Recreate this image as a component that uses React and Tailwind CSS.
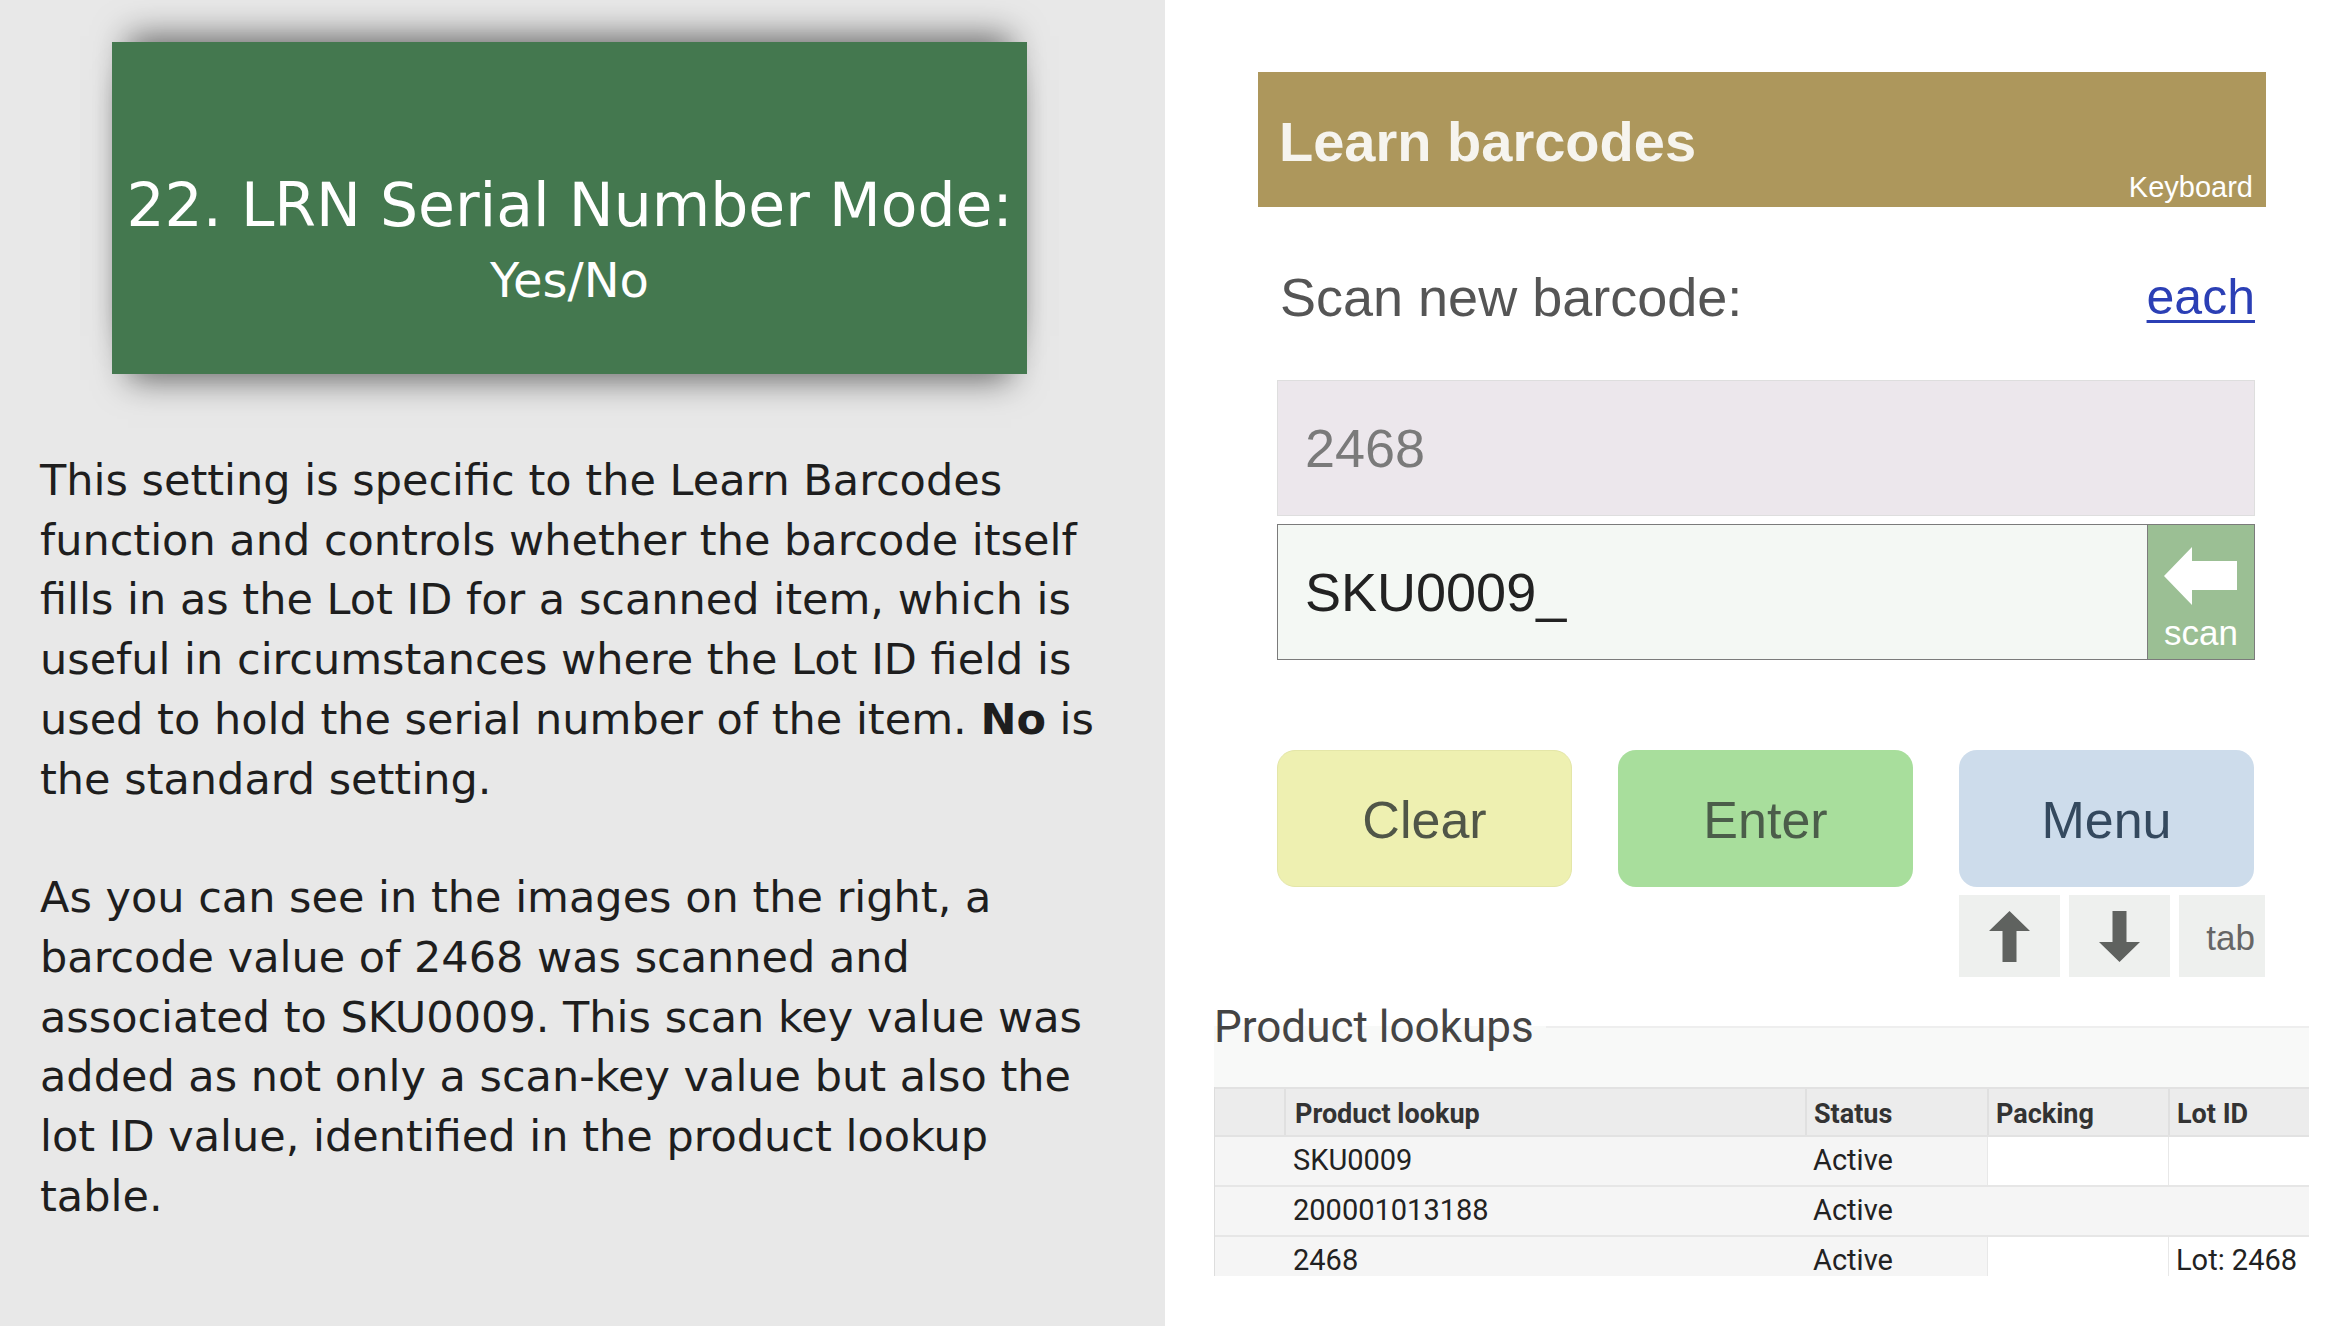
import React from "react";

const leftFont = { fontFamily: '"DejaVu Sans", "Open Sans", sans-serif' };

const ArrowUp = () => (
  <svg width="41" height="51" viewBox="0 0 41 51">
    <polygon points="20.5,0 41,20 27.5,20 27.5,51 13.5,51 13.5,20 0,20" fill="#5f625f" />
  </svg>
);

const ArrowDown = () => (
  <svg width="41" height="51" viewBox="0 0 41 51">
    <polygon points="13.5,0 27.5,0 27.5,31 41,31 20.5,51 0,31 13.5,31" fill="#5f625f" />
  </svg>
);

const rows = [
  { code: "SKU0009", status: "Active", lot: "", packWhite: true, lotWhite: true },
  { code: "200001013188", status: "Active", lot: "", packWhite: false, lotWhite: false },
  { code: "2468", status: "Active", lot: "Lot: 2468", packWhite: true, lotWhite: true },
];

export default function App() {
  return (
    <div className="flex h-[1326px] w-[2350px] overflow-hidden bg-white">
      {/* Left: explanation */}
      <div className="w-[1165px] shrink-0 bg-[#e8e8e8] pt-[42px] text-[#1e1e1e]" style={leftFont}>
        <div className="ml-[112px] h-[332px] w-[915px] bg-[#44784f] pt-[128px] text-center text-white shadow-[0_-22px_32px_-16px_rgba(0,0,0,0.55),0_22px_32px_-16px_rgba(0,0,0,0.55)]">
          <div className="whitespace-nowrap text-[60px] leading-[70px]">22. LRN Serial Number Mode:</div>
          <div className="mt-[10px] text-[48px] leading-[60px]">Yes/No</div>
        </div>

        <div className="mt-[77px] pl-[40px] text-[43px] leading-[59.7px] whitespace-nowrap">
          <p>
            This setting is specific to the Learn Barcodes
            <br />
            function and controls whether the barcode itself
            <br />
            fills in as the Lot ID for a scanned item, which is
            <br />
            useful in circumstances where the Lot ID field is
            <br />
            used to hold the serial number of the item. <span className="font-semibold">No</span> is
            <br />
            the standard setting.
          </p>
          <p className="mt-[59px]">
            As you can see in the images on the right, a
            <br />
            barcode value of 2468 was scanned and
            <br />
            associated to SKU0009. This scan key value was
            <br />
            added as not only a scan-key value but also the
            <br />
            lot ID value, identified in the product lookup
            <br />
            table.
          </p>
        </div>
      </div>

      {/* Right: device screenshot */}
      <div className="flex flex-1 flex-col bg-white" style={{ fontFamily: '"Liberation Sans", Arial, sans-serif' }}>
        <div className="ml-[93px] mr-[85px] mt-[72px] flex h-[135px] flex-col bg-[#ad975c] pl-[21px] pr-[13px] text-[#f6f4ee]">
          <div className="pt-[42px] text-[56px] font-bold leading-[56px]">Learn barcodes</div>
          <div className="mt-[3px] text-right text-[29px] leading-[29px] text-white">Keyboard</div>
        </div>

        <div className="ml-[115px] mr-[96px] mt-[63px] flex items-center justify-between text-[54px] leading-[54px]">
          <span className="text-[#555555]">Scan new barcode:</span>
          <a href="#" className="text-[50px] text-[#2b3fb5] underline decoration-[3px] underline-offset-[6px]">
            each
          </a>
        </div>

        <div className="ml-[112px] mr-[96px] mt-[56px] flex h-[136px] items-center border border-[#dedede] bg-[#ece7ec] pl-[27px] text-[54px] text-[#7a7a7a]">
          2468
        </div>

        <div className="ml-[112px] mr-[96px] mt-[8px] flex h-[136px] border border-[#7b7b7b] bg-[#f4f8f4]">
          <div className="flex flex-1 items-center pl-[27px] text-[54px] text-[#222222]">SKU0009_</div>
          <div className="flex w-[107px] flex-col items-center border-l border-[#7b7b7b] bg-[#9bbf94] pt-[22px]">
            <svg width="74" height="58" viewBox="0 0 74 58">
              <polygon points="0,29 28,0 28,14 73,14 73,43 28,43 28,58" fill="#ffffff" />
            </svg>
            <span className="mt-[10px] text-[35px] leading-[36px] text-white">scan</span>
          </div>
        </div>

        <div className="ml-[112px] mt-[90px] flex gap-[46px] text-[52px]">
          <button className="flex h-[137px] w-[295px] items-center justify-center rounded-[18px] border border-[#e4e6a8] bg-[#eef0b1] pt-[3px] text-[#505648]">
            Clear
          </button>
          <button className="flex h-[137px] w-[295px] items-center justify-center rounded-[18px] bg-[#a8de9c] pt-[3px] text-[#4b5d4a]">
            Enter
          </button>
          <button className="flex h-[137px] w-[295px] items-center justify-center rounded-[18px] bg-[#cddceb] pt-[3px] text-[#34495e]">
            Menu
          </button>
        </div>

        <div className="ml-[794px] mt-[8px] flex h-[82px]">
          <div className="flex w-[101px] items-center justify-center bg-[#eef0ee]">
            <ArrowUp />
          </div>
          <div className="ml-[9px] flex w-[101px] items-center justify-center bg-[#eef0ee]">
            <ArrowDown />
          </div>
          <div className="ml-[9px] flex w-[86px] items-center justify-end bg-[#eef0ee] pr-[10px] pt-[4px] text-[35px] text-[#666666]">
            tab
          </div>
        </div>

        <fieldset
          className="ml-[49px] mr-[42px] mt-[28px] border-t-2 border-[#eeeeee] bg-[#f8f9f8] pt-[38px]"
          style={{ fontFamily: "Roboto, sans-serif" }}
        >
          <legend className="pr-[12px] text-[44px] leading-[44px] text-[#444444]">Product lookups</legend>
          <div className="h-[189px] overflow-hidden border-l border-[#dddddd] text-[29px] text-[#222222]">
            <div className="grid h-[50px] grid-cols-[69px_521px_182px_181px_141px] border-t-2 border-b-2 border-[#e2e2e2] bg-[#ececec] text-[27px] font-bold text-[#333333]">
              <div />
              <div className="flex items-center border-l-2 border-[#e0e0e0] pl-[9px] pt-[5px]">Product lookup</div>
              <div className="flex items-center border-l-2 border-[#e0e0e0] pl-[7px] pt-[5px]">Status</div>
              <div className="flex items-center border-l-2 border-[#e0e0e0] pl-[7px] pt-[5px]">Packing</div>
              <div className="flex items-center border-l-2 border-[#e0e0e0] pl-[7px] pt-[5px]">Lot ID</div>
            </div>
            {rows.map((r) => (
              <div
                key={r.code}
                className="grid h-[50px] grid-cols-[69px_521px_182px_181px_141px] border-b-2 border-[#e6e6e6] bg-[#f5f5f5]"
              >
                <div />
                <div className="flex items-center pl-[9px]">{r.code}</div>
                <div className="flex items-center pl-[8px]">{r.status}</div>
                <div className={r.packWhite ? "border-l border-[#e8e8e8] bg-white" : ""} />
                <div className={`flex items-center pl-[7px] ${r.lotWhite ? "border-l border-[#e8e8e8] bg-white" : ""}`}>
                  {r.lot}
                </div>
              </div>
            ))}
          </div>
        </fieldset>
      </div>
    </div>
  );
}
